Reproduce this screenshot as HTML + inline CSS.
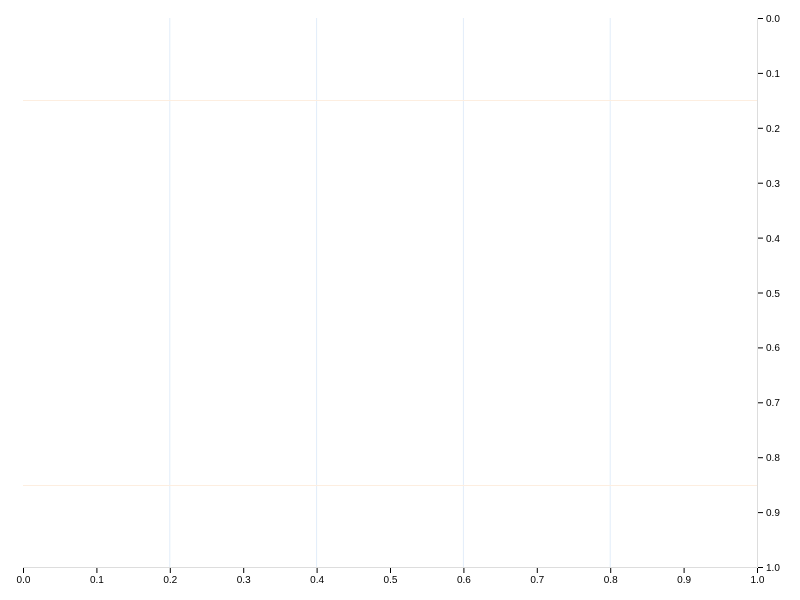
<!DOCTYPE html>
<html><head><style>html,body{margin:0;padding:0;background:#fff;width:800px;height:600px;overflow:hidden}</style></head>
<body>
<svg width="800" height="600" xmlns="http://www.w3.org/2000/svg" font-family="Liberation Sans, sans-serif" font-size="10" fill="#000">
<g stroke="#e2edf9" stroke-width="1">
<line x1="169.8" y1="18" x2="169.8" y2="567"/>
<line x1="316.6" y1="18" x2="316.6" y2="567"/>
<line x1="463.4" y1="18" x2="463.4" y2="567"/>
<line x1="610.2" y1="18" x2="610.2" y2="567"/>
</g>
<g stroke="#fdeee0" stroke-width="1">
<line x1="23" y1="100.5" x2="757" y2="100.5"/>
<line x1="23" y1="485.5" x2="757" y2="485.5"/>
</g>
<line x1="23" y1="567.5" x2="757" y2="567.5" stroke="#dddddd"/>
<line x1="757.5" y1="18" x2="757.5" y2="567" stroke="#dddddd"/>
<g stroke="#000" stroke-width="1">
<line x1="23.5" y1="568" x2="23.5" y2="573"/><line x1="96.9" y1="568" x2="96.9" y2="573"/><line x1="170.3" y1="568" x2="170.3" y2="573"/><line x1="243.7" y1="568" x2="243.7" y2="573"/><line x1="317.1" y1="568" x2="317.1" y2="573"/><line x1="390.5" y1="568" x2="390.5" y2="573"/><line x1="463.9" y1="568" x2="463.9" y2="573"/><line x1="537.3" y1="568" x2="537.3" y2="573"/><line x1="610.7" y1="568" x2="610.7" y2="573"/><line x1="684.1" y1="568" x2="684.1" y2="573"/><line x1="757.5" y1="568" x2="757.5" y2="573"/>
<line x1="758" y1="18.5" x2="763" y2="18.5"/><line x1="758" y1="73.4" x2="763" y2="73.4"/><line x1="758" y1="128.3" x2="763" y2="128.3"/><line x1="758" y1="183.2" x2="763" y2="183.2"/><line x1="758" y1="238.1" x2="763" y2="238.1"/><line x1="758" y1="293" x2="763" y2="293"/><line x1="758" y1="347.9" x2="763" y2="347.9"/><line x1="758" y1="402.8" x2="763" y2="402.8"/><line x1="758" y1="457.7" x2="763" y2="457.7"/><line x1="758" y1="512.6" x2="763" y2="512.6"/><line x1="758" y1="567.5" x2="763" y2="567.5"/>
</g>
<g text-anchor="middle">
<text x="23.5" y="583">0.0</text><text x="96.9" y="583">0.1</text><text x="170.3" y="583">0.2</text><text x="243.7" y="583">0.3</text><text x="317.1" y="583">0.4</text><text x="390.5" y="583">0.5</text><text x="463.9" y="583">0.6</text><text x="537.3" y="583">0.7</text><text x="610.7" y="583">0.8</text><text x="684.1" y="583">0.9</text><text x="757.5" y="583">1.0</text>
</g>
<g>
<text x="766" y="22">0.0</text><text x="766" y="77">0.1</text><text x="766" y="132">0.2</text><text x="766" y="187">0.3</text><text x="766" y="242">0.4</text><text x="766" y="297">0.5</text><text x="766" y="351">0.6</text><text x="766" y="406">0.7</text><text x="766" y="461">0.8</text><text x="766" y="516">0.9</text><text x="766" y="571">1.0</text>
</g>
</svg>
</body></html>
